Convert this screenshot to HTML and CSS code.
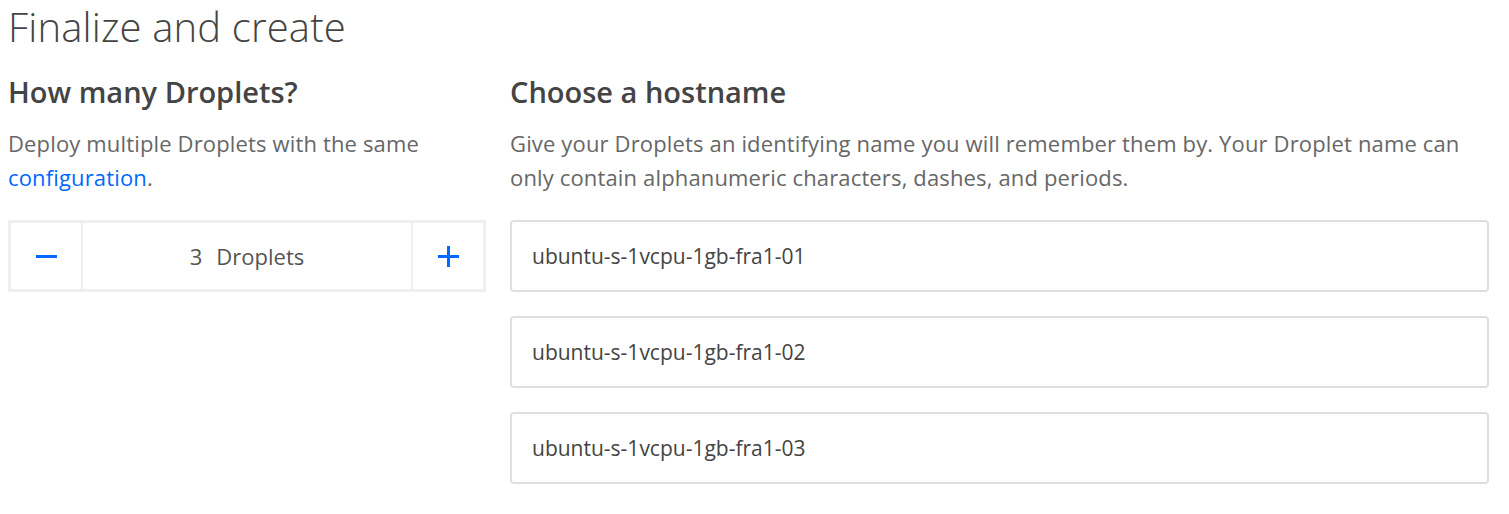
FILE: index.html
```html
<!DOCTYPE html>
<html lang="en">
<head>
<meta charset="utf-8">
<title>Finalize and create</title>
<link rel="stylesheet" href="styles.css">
</head>
<body>
<main class="page">
  <h1 class="title">Finalize and create</h1>
  <div class="columns">
    <section class="col">
      <h2 class="heading">How many Droplets?</h2>
      <p class="desc">Deploy multiple Droplets with the same <a class="link" href="#">configuration</a>.</p>
      <div class="counter">
        <button class="counter-btn" type="button" aria-label="Decrease">
          <svg width="21" height="21" viewBox="0 0 21 21"><rect x="0" y="9" width="21" height="3" fill="#0069ff"/></svg>
        </button>
        <div class="counter-value"><span class="num">3</span><span>Droplets</span></div>
        <button class="counter-btn" type="button" aria-label="Increase">
          <svg width="21" height="21" viewBox="0 0 21 21"><rect x="0" y="9" width="21" height="3" fill="#0069ff"/><rect x="9" y="0" width="3" height="21" fill="#0069ff"/></svg>
        </button>
      </div>
    </section>
    <section class="col">
      <h2 class="heading">Choose a hostname</h2>
      <p class="desc">Give your Droplets an identifying name you will remember them by. Your Droplet name can only contain alphanumeric characters, dashes, and periods.</p>
      <div class="inputs">
        <input class="host" type="text" value="ubuntu-s-1vcpu-1gb-fra1-01">
        <input class="host" type="text" value="ubuntu-s-1vcpu-1gb-fra1-02">
        <input class="host" type="text" value="ubuntu-s-1vcpu-1gb-fra1-03">
      </div>
    </section>
  </div>
</main>
</body>
</html>
```
FILE: styles.css
```css
* { box-sizing: border-box; }
html, body { margin: 0; background: #fff; }
body { font-family: "Open Sans", Lato, sans-serif; color: #444; }
.page { padding: 3px 8px 0 8px; }
.title {
  margin: 0;
  font-size: 40px;
  font-weight: 300;
  line-height: 48px;
  letter-spacing: 0.15px;
  color: #444;
}
.columns {
  display: grid;
  grid-template-columns: 478px 979px;
  column-gap: 24px;
  margin-top: 24px;
}
.heading {
  margin: 0;
  font-size: 29px;
  font-weight: 600;
  line-height: 34px;
  color: #444;
}
.desc {
  margin: 17px 0 0 0;
  font-size: 22px;
  line-height: 34px;
  letter-spacing: 0.15px;
  color: #676767;
}
.link { color: #0069ff; text-decoration: none; }
.counter {
  margin-top: 26px;
  display: flex;
  height: 72px;
  border: 3px solid #efefef;
}
.counter-btn {
  width: 70px;
  border: 0;
  padding: 0;
  background: #fff;
  display: flex;
  align-items: center;
  justify-content: center;
}
.counter-value {
  flex: 1;
  display: flex;
  align-items: center;
  justify-content: center;
  gap: 14px;
  border-left: 2px solid #efefef;
  border-right: 2px solid #efefef;
  font-size: 22px;
  color: #555;
}
.inputs {
  margin-top: 26px;
  display: flex;
  flex-direction: column;
  gap: 24px;
}
.host {
  display: block;
  width: 100%;
  height: 72px;
  border: 2px solid #dfdfdf;
  border-radius: 4px;
  padding: 0 20px;
  font-family: inherit;
  font-size: 21px;
  color: #444;
  background: #fff;
}
```
